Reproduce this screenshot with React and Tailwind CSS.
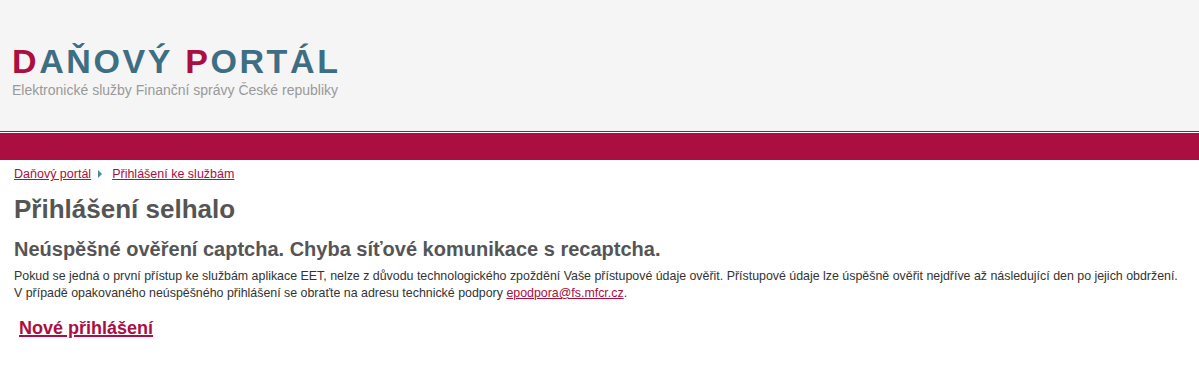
export default function App() {
  return (
    <div className="min-h-[378px] bg-white" style={{ fontFamily: '"Liberation Sans", Arial, sans-serif' }}>
      <header className="h-[131px] bg-[#f5f5f5] px-3 pt-[42px]">
        <div className="text-[34px] leading-[39px] font-bold tracking-[2.6px] text-[#3d6e84]">
          <span className="text-[#ab0e41]">D</span>AŇOVÝ <span className="text-[#ab0e41]">P</span>ORTÁL
        </div>
        <div className="text-[14px] leading-[18px] text-[#999999]">
          Elektronické služby Finanční správy České republiky
        </div>
      </header>
      <div className="h-[1px] bg-[#ab0e41]" />
      <div className="h-[1px] bg-white" />
      <div className="h-[27px] bg-[#ab0e41]" />
      <main className="px-[14px]">
        <nav className="mt-[6px] flex items-center text-[12.5px] leading-[16px] text-[#ab0e41]">
          <a href="#" className="underline">Daňový portál</a>
          <span className="ml-[7px] mr-[10px] inline-block h-0 w-0 border-y-[4px] border-l-[4px] border-y-transparent border-l-[#4a8a9e]" />
          <a href="#" className="underline">Přihlášení ke službám</a>
        </nav>
        <h1 className="mt-[12px] text-[26px] leading-[30px] font-bold text-[#555555]">Přihlášení selhalo</h1>
        <h2 className="mt-[12px] text-[20px] leading-[26px] font-bold text-[#555555]">
          Neúspěšné ověření captcha. Chyba síťové komunikace s recaptcha.
        </h2>
        <p className="mt-[6px] whitespace-nowrap text-[12.4px] leading-[17px] text-[#333333]">
          Pokud se jedná o první přístup ke službám aplikace EET, nelze z důvodu technologického zpoždění Vaše přístupové údaje ověřit. Přístupové údaje lze úspěšně ověřit nejdříve až následující den po jejich obdržení.
          <br />
          V případě opakovaného neúspěšného přihlášení se obraťte na adresu technické podpory{" "}
          <a href="#" className="text-[#ab0e41] underline">epodpora@fs.mfcr.cz</a>.
        </p>
        <a href="#" className="mt-[15px] ml-[5px] inline-block text-[18px] leading-[22px] font-bold text-[#ab0e41] underline decoration-2">
          Nové přihlášení
        </a>
      </main>
    </div>
  );
}
